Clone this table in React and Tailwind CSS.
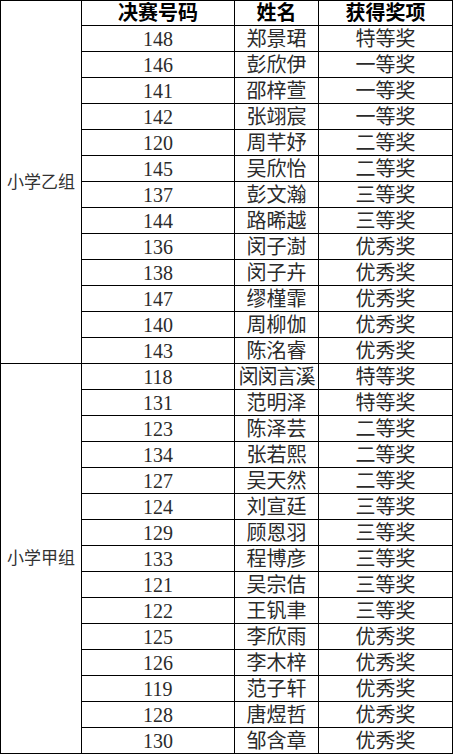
import { Fragment } from 'react';

const groups = [
  {
    name: '小学乙组',
    rows: [
      ['148', '郑景珺', '特等奖'],
      ['146', '彭欣伊', '一等奖'],
      ['141', '邵梓萱', '一等奖'],
      ['142', '张翊宸', '一等奖'],
      ['120', '周芊妤', '二等奖'],
      ['145', '吴欣怡', '二等奖'],
      ['137', '彭文瀚', '三等奖'],
      ['144', '路晞越', '三等奖'],
      ['136', '闵子澍', '优秀奖'],
      ['138', '闵子卉', '优秀奖'],
      ['147', '缪槿霏', '优秀奖'],
      ['140', '周柳伽', '优秀奖'],
      ['143', '陈洺睿', '优秀奖'],
    ],
  },
  {
    name: '小学甲组',
    rows: [
      ['118', '闵闵言溪', '特等奖'],
      ['131', '范明泽', '特等奖'],
      ['123', '陈泽芸', '二等奖'],
      ['134', '张若熙', '二等奖'],
      ['127', '吴天然', '二等奖'],
      ['124', '刘宣廷', '三等奖'],
      ['129', '顾恩羽', '三等奖'],
      ['133', '程博彦', '三等奖'],
      ['121', '吴宗佶', '三等奖'],
      ['122', '王钒聿', '三等奖'],
      ['125', '李欣雨', '优秀奖'],
      ['126', '李木梓', '优秀奖'],
      ['119', '范子轩', '优秀奖'],
      ['128', '唐煜哲', '优秀奖'],
      ['130', '邹含章', '优秀奖'],
    ],
  },
];

const font = { fontFamily: '"Liberation Serif", "Noto Sans CJK SC", serif' };

export default function App() {
  const cell = 'border border-black p-0 text-center leading-none';

  return (
    <div className="w-[453px] h-[755px] bg-white overflow-hidden" style={font}>
      <table className="w-[452px] table-fixed border-collapse border border-black text-[20px] text-[#2b2b2b]">
        <colgroup>
          <col className="w-[81px]" />
          <col className="w-[153px]" />
          <col className="w-[84px]" />
          <col className="w-[134px]" />
        </colgroup>
        <tbody>
          {groups.map((g, gi) => (
            g.rows.map((r, i) => (
              <Fragment key={gi + '-' + i}>
                {gi === 0 && i === 0 && (
                  <tr className="h-[25px]">
                    <td rowSpan={14} className={cell + ' text-[17px] text-[#333]'}>{g.name}</td>
                    <th className={cell + ' font-bold text-black'}>决赛号码</th>
                    <th className={cell + ' font-bold text-black'}>姓名</th>
                    <th className={cell + ' font-bold text-black'}>获得奖项</th>
                  </tr>
                )}
                <tr className="h-[26px]">
                  {gi === 1 && i === 0 && (
                    <td rowSpan={g.rows.length} className={cell + ' text-[17px] text-[#333]'}>{g.name}</td>
                  )}
                  <td className={cell}>{r[0]}</td>
                  <td className={cell + (r[1].length > 3 ? ' tracking-[-1px]' : '')}>{r[1]}</td>
                  <td className={cell}>{r[2]}</td>
                </tr>
              </Fragment>
            ))
          ))}
        </tbody>
      </table>
    </div>
  );
}
